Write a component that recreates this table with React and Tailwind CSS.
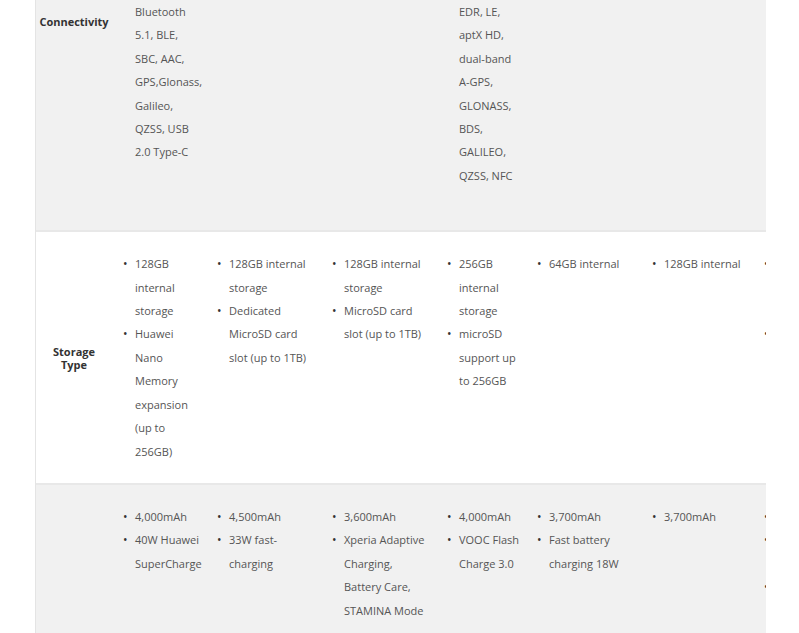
import React from 'react';

// Spec comparison table, scrolled part way down (Connectivity / Storage / Battery rows)
const cols = [
  'w-[94px] pr-[3px]',
  'w-[115px] pr-[7px]',
  'w-[115px] pr-[6px]',
  'w-[90px] pr-[3px]',
  'w-[115px] pr-[12px]',
  'w-[112px] pr-[4px]',
  'w-[120px] pr-[4px]',
];

const rows = [
  {
    label: 'Connectivity',
    bg: 'bg-[#f1f1f1]',
    pad: 'pt-0 pb-[43px]',
    labelPad: 'pt-[15px] self-start',
    lines: true,
    cells: [
      ['Bluetooth', '5.1, BLE,', 'SBC, AAC,', 'GPS,Glonass,', 'Galileo,', 'QZSS, USB', '2.0 Type-C'],
      [],
      [],
      ['EDR, LE,', 'aptX HD,', 'dual-band', 'A-GPS,', 'GLONASS,', 'BDS,', 'GALILEO,', 'QZSS, NFC'],
      [],
      [],
      [],
    ],
  },
  {
    label: 'Storage Type',
    bg: 'bg-white',
    pad: 'py-[20px]',
    labelPad: 'self-center',
    cells: [
      ['128GB internal storage', 'Huawei Nano Memory expansion (up to 256GB)'],
      ['128GB internal storage', 'Dedicated MicroSD card slot (up to 1TB)'],
      ['128GB internal storage', 'MicroSD card slot (up to 1TB)'],
      ['256GB internal storage', 'microSD support up to 256GB'],
      ['64GB internal'],
      ['128GB internal'],
      ['128GB internal storage expandable', 'microSD'],
    ],
  },
  {
    label: '',
    bg: 'bg-[#f1f1f1]',
    pad: 'py-[20px]',
    labelPad: 'self-center',
    cells: [
      ['4,000mAh', '40W Huawei SuperCharge'],
      ['4,500mAh', '33W fast-charging'],
      ['3,600mAh', 'Xperia Adaptive Charging, Battery Care, STAMINA Mode'],
      ['4,000mAh', 'VOOC Flash Charge 3.0'],
      ['3,700mAh', 'Fast battery charging 18W'],
      ['3,700mAh'],
      ['4,500mAh', '25W Super Fast Charging', 'Wireless charging'],
    ],
  },
];

const Cell = ({ items, lines, className, pad }) => (
  <div className={`shrink-0 ${className} ${pad}`}>
    {lines ? (
      <div className="pl-[23px]">
        {items.map((t, i) => <p key={i}>{t}</p>)}
      </div>
    ) : (
      <ul className="pl-[11px]">
        {items.map((t, i) => (
          <li key={i} className="flex">
            <span className="w-[12px] shrink-0 text-[12px] text-[#333]">•</span>
            <span>{t}</span>
          </li>
        ))}
      </ul>
    )}
  </div>
);

export default function App() {
  return (
    <div
      className="bg-white w-[799px] h-[633px] overflow-hidden"
      style={{ fontFamily: '"Open Sans", "Liberation Sans", sans-serif' }}
    >
      <div className="ml-[35px] w-[731px] overflow-hidden border-l border-[#e4e4e4]">
        {rows.map((row, ri) => (
          <div
            key={ri}
            className={`flex w-[900px] ${row.bg} ${ri > 0 ? 'border-t-2 border-[#e8e8e8]' : ''} ${ri === 2 ? 'min-h-[340px]' : ''}`}
          >
            <div
              className={`w-[76px] shrink-0 px-[3px] text-center text-[11px] leading-[13px] font-bold text-[#333] ${row.labelPad}`}
            >
              {row.label}
            </div>
            {row.cells.map((items, ci) => (
              <Cell
                key={ci}
                items={items}
                lines={row.lines}
                pad={row.pad}
                className={`${cols[ci]} text-[11px] leading-[23.4px] text-[#555]`}
              />
            ))}
          </div>
        ))}
      </div>
    </div>
  );
}
